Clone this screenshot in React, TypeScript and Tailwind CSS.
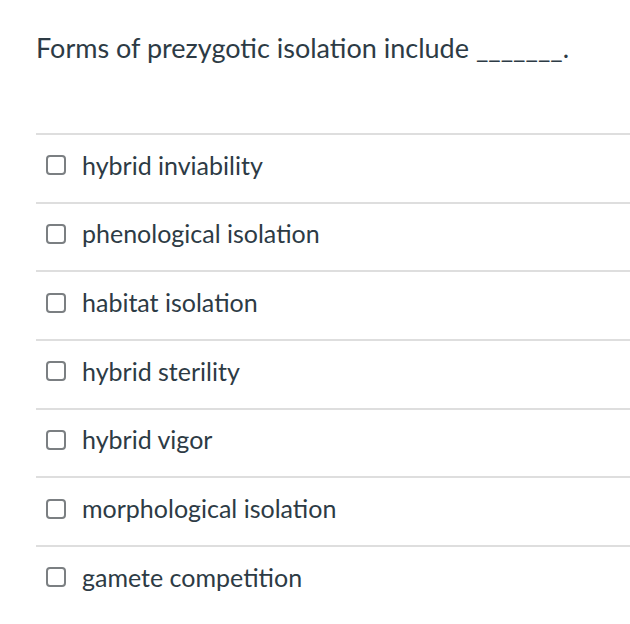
import React from "react"

const answers = [
  "hybrid inviability",
  "phenological isolation",
  "habitat isolation",
  "hybrid sterility",
  "hybrid vigor",
  "morphological isolation",
  "gamete competition",
]

const Answer = ({ label }: { label: string }) => (
  <label className="flex items-center h-[68.7px] border-t-2 border-[#dedede] pb-[6px]">
    <span className="shrink-0 ml-[10px] w-[20px] h-[20px] rounded-[4px] border-2 border-[#7b7f82] bg-white" />
    <span className="ml-[16px] text-[25px] text-[#2d3b45]">{label}</span>
  </label>
)

export default function App() {
  return (
    <div
      className="bg-white w-[630px] h-[624px] overflow-hidden pl-[36px]"
      style={{ fontFamily: "Lato, 'Liberation Sans', sans-serif" }}
    >
      <div className="pt-[28px] h-[133px] text-[27px] leading-[40px] text-[#2d3b45]">
        Forms of prezygotic isolation include _______.
      </div>
      <div>
        {answers.map((a) => (
          <Answer key={a} label={a} />
        ))}
      </div>
    </div>
  )
}
